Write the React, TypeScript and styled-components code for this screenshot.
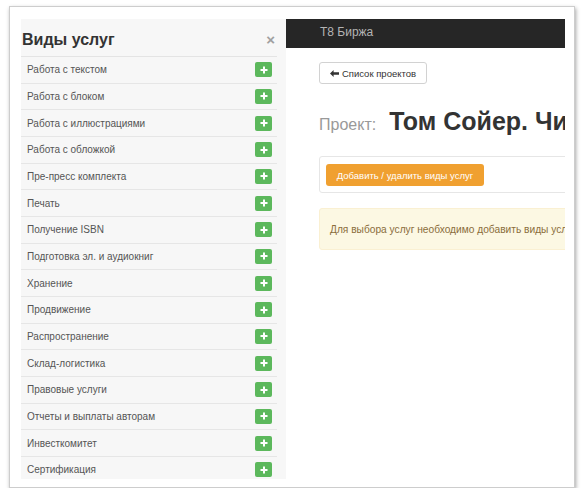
import React from "react";
import styled, { createGlobalStyle } from "styled-components";

const SERVICES = [
  "Работа с текстом",
  "Работа с блоком",
  "Работа с иллюстрациями",
  "Работа с обложкой",
  "Пре-пресс комплекта",
  "Печать",
  "Получение ISBN",
  "Подготовка эл. и аудиокниг",
  "Хранение",
  "Продвижение",
  "Распространение",
  "Склад-логистика",
  "Правовые услуги",
  "Отчеты и выплаты авторам",
  "Инвесткомитет",
  "Сертификация",
];

function App() {
  return (
    <>
      <GlobalStyle />
      <Shot>
        <Viewport>
          <Sidebar>
            <SidebarHeader>
              <SidebarTitle>Виды услуг</SidebarTitle>
              <CloseButton>×</CloseButton>
            </SidebarHeader>
            {SERVICES.map((name) => (
              <ServiceRow key={name}>
                <span>{name}</span>
                <AddButton>
                  <svg width="8" height="8" viewBox="0 0 8 8">
                    <path d="M4 0.5v7M0.5 4h7" stroke="#fff" strokeWidth="2" />
                  </svg>
                </AddButton>
              </ServiceRow>
            ))}
          </Sidebar>
          <Main>
            <Navbar>T8 Биржа</Navbar>
            <Content>
              <BackButton>
                <svg width="9" height="7" viewBox="0 0 9 7">
                  <path d="M0 3.5L3.6 0v2.3H9v2.4H3.6V7z" fill="#333" />
                </svg>
                Список проектов
              </BackButton>
              <Heading>
                <HeadingLabel>Проект:</HeadingLabel>
                <HeadingTitle>Том Сойер. Читаем вместе</HeadingTitle>
              </Heading>
              <Panel>
                <OrangeButton>Добавить / удалить виды услуг</OrangeButton>
              </Panel>
              <Alert>Для выбора услуг необходимо добавить виды услуг</Alert>
            </Content>
          </Main>
        </Viewport>
      </Shot>
    </>
  );
}

export default App;

const GlobalStyle = createGlobalStyle`
  html, body {
    margin: 0;
    background: #fff;
  }
  body {
    font-family: "Liberation Sans", Arial, sans-serif;
  }
  * {
    box-sizing: border-box;
  }
`;
const Shot = styled.div`
  margin: 6px 0 0 9px;
  width: 566px;
  height: 482px;
  padding: 12px 9px 8px 11px;
  border: 1px solid #cdcdcd;
  box-shadow: 1px 2px 4px rgba(0, 0, 0, 0.35);
  background: #fff;
`;
const Viewport = styled.div`
  display: flex;
  height: 100%;
  overflow: hidden;
`;
const Sidebar = styled.div`
  flex: none;
  width: 265px;
  height: 100%;
  padding-right: 9px;
  overflow: hidden;
  background: #f7f7f7;
`;
const SidebarHeader = styled.div`
  display: flex;
  align-items: center;
  justify-content: space-between;
  height: 38px;
  padding: 4px 2px 0 1px;
  border-bottom: 1px solid #e4e4e4;
`;
const SidebarTitle = styled.h2`
  margin: 0;
  color: #333;
  font-size: 16px;
  font-weight: 700;
`;
const CloseButton = styled.span`
  color: #a0a0a0;
  font-size: 15px;
  font-weight: 700;
  line-height: 1;
`;
const ServiceRow = styled.div`
  display: flex;
  align-items: center;
  justify-content: space-between;
  height: 26.67px;
  padding: 0 5px 0 6px;
  border-bottom: 1px solid #e6e6e6;
  color: #555;
  font-size: 10px;
`;
const AddButton = styled.span`
  display: flex;
  align-items: center;
  justify-content: center;
  width: 17px;
  height: 15px;
  border-radius: 2px;
  background: #5cb85c;
`;
const Main = styled.div`
  flex: 1;
  min-width: 0;
  overflow: hidden;
  background: #fff;
`;
const Navbar = styled.div`
  display: flex;
  align-items: center;
  height: 29px;
  padding: 0 0 4px 34px;
  background: #262626;
  color: #b4b4b4;
  font-size: 12px;
`;
const Content = styled.div`
  width: 460px;
  padding: 14px 0 0 33px;
`;
const BackButton = styled.div`
  display: flex;
  align-items: center;
  justify-content: center;
  gap: 3px;
  width: 108px;
  height: 22px;
  border: 1px solid #d2d2d2;
  border-radius: 3px;
  background: #fff;
  color: #333;
  font-size: 9.5px;
`;
const Heading = styled.div`
  display: flex;
  align-items: baseline;
  gap: 13px;
  margin-top: 24px;
  line-height: 27px;
  white-space: nowrap;
`;
const HeadingLabel = styled.span`
  color: #999;
  font-size: 16px;
`;
const HeadingTitle = styled.span`
  color: #333;
  font-size: 25px;
  font-weight: 700;
`;
const Panel = styled.div`
  margin-top: 18px;
  padding: 7px 6px 6px;
  border: 1px solid #e6e6e6;
  border-radius: 3px;
`;
const OrangeButton = styled.div`
  display: flex;
  align-items: center;
  justify-content: center;
  width: 158px;
  height: 22px;
  border-radius: 3px;
  background: #f0a030;
  color: #fff;
  font-size: 9.5px;
`;
const Alert = styled.div`
  display: flex;
  align-items: center;
  height: 42px;
  margin-top: 15px;
  padding-left: 10px;
  border: 1px solid #faf0d2;
  border-radius: 3px;
  background: #fcf8e3;
  color: #8a6d3b;
  font-size: 10.2px;
  white-space: nowrap;
`;
